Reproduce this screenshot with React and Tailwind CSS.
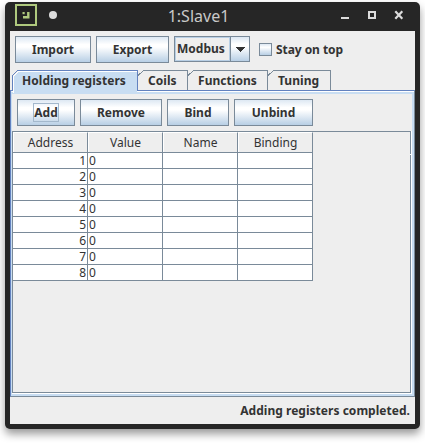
import React from "react";

function Button({ children, width, focused }) {
  return (
    <button
      className={`flex h-[27px] shrink-0 items-center justify-center border border-[#7a8a99] bg-[linear-gradient(to_bottom,#dde8f3_0%,#ffffff_30%,#ffffff_40%,#b8cfe5_100%)] text-[12px] leading-[17px] font-bold ${width}`}
    >
      <span
        className={`flex h-[19px] items-center justify-center border ${focused ? "w-[26px] border-[#a3b8cc]" : "border-transparent"}`}
      >
        {children}
      </span>
    </button>
  );
}

function Tab({ label, width, points, selected }) {
  return (
    <div className={`relative h-[21px] shrink-0 ${width} ${selected ? "z-10" : ""}`}>
      <svg className="absolute top-0 left-0 h-[23px] w-full" shapeRendering="crispEdges">
        {selected && <path d="M1 23V6L6 1H125V23Z" fill="#c8ddf2" />}
        {selected && <path d="M1.5 23V6.5L6.5 1.5H125" fill="none" stroke="#fff" />}
        <path d={points} fill="none" stroke={selected ? "#6382bf" : "#7a8a99"} />
      </svg>
      <span className="relative flex h-[21px] items-center pl-[10px] text-[12px] font-bold tracking-[0.04px] whitespace-nowrap">
        {label}
      </span>
    </div>
  );
}

const columns = ["Address", "Value", "Name", "Binding"];
const rows = [1, 2, 3, 4, 5, 6, 7, 8];

function RegisterTable() {
  return (
    <div className="w-[300px] text-[12px]">
      <div className="flex h-[21px] border-b border-[#7a8a99]">
        {columns.map((c) => (
          <div
            key={c}
            className="flex h-[20px] w-[75px] items-center justify-center border-t border-r border-l border-t-white border-r-[#7a8a99] border-l-white"
          >
            {c}
          </div>
        ))}
      </div>
      {rows.map((n) => (
        <div key={n} className="flex h-4 border-b border-[#7a8a99] bg-white leading-[15px]">
          <div className="h-[15px] w-[75px] border-r border-[#7a8a99] pr-px text-right">{n}</div>
          <div className="h-[15px] w-[75px] border-r border-[#7a8a99] pl-px">0</div>
          <div className="h-[15px] w-[75px] border-r border-[#7a8a99]" />
          <div className="h-[15px] w-[75px] border-r border-[#7a8a99]" />
        </div>
      ))}
    </div>
  );
}

function TitleBar() {
  return (
    <div className="flex h-[29px] shrink-0 items-start text-[#dcdcdc]">
      <svg className="mt-[2px] ml-[10px] shrink-0" width="22" height="22" viewBox="0 0 22 22">
        <rect x="1" y="1" width="20" height="20" fill="#222" stroke="#afc97e" strokeWidth="2" />
        <path d="M7.5 8h2.2v2.2H7.5z" fill="#afc97e" />
        <path d="M13.3 8v5.3H8" fill="none" stroke="#afc97e" strokeWidth="2.4" />
      </svg>
      <div className="mt-[9px] ml-[12px] h-2 w-2 shrink-0 rounded-full bg-[#dcdcdc]" />
      <div className="w-[283px] shrink-0 text-center text-[16px] leading-[28px] text-[#c9c9c9]">
        1:Slave1
      </div>
      <svg width="64" height="29" fill="none" stroke="#dcdcdc" strokeWidth="2" className="shrink-0">
        <path d="M1 16h8" />
        <rect x="29" y="10" width="6" height="6" />
        <path d="M55.3 9.3l7 7.4M62.3 9.3l-7 7.4" strokeWidth="2.2" />
      </svg>
    </div>
  );
}

export default function App() {
  return (
    <div
      className="h-[443px] w-[425px] overflow-hidden bg-white px-[5px] pt-[2px] text-[#333333]"
      style={{ fontFamily: '"Noto Sans", sans-serif' }}
    >
      <div className="flex h-[427px] w-[415px] flex-col rounded-[5px] bg-[#262626] px-[5px] pb-[5px] shadow-[0_5px_9px_rgba(0,0,0,0.4)]">
        <div className="-mx-[5px]">
          <TitleBar />
        </div>
        <div className="flex h-[393px] w-[405px] flex-col bg-[#eeeeee]">
          <div className="flex h-[39px] shrink-0 gap-[5px] pt-[5px] pl-[5px]">
            <Button width="w-[76px]">Import</Button>
            <Button width="w-[73px]">Export</Button>
            <div className="flex h-[26px] w-[76px] border border-[#7a8a99] text-[12px] font-bold">
              <div className="flex w-[55px] items-center border border-[#b8cfe5] pb-px pl-px">
                Modbus
              </div>
              <div className="flex w-[19px] items-center justify-center border-l border-[#7a8a99] bg-[linear-gradient(to_bottom,#dde8f3_0%,#ffffff_30%,#ffffff_40%,#b8cfe5_100%)]">
                <svg width="10" height="5" className="mt-px" shapeRendering="crispEdges">
                  <path d="M0 0h10L5 5z" fill="#333" />
                </svg>
              </div>
            </div>
            <label className="ml-[4px] flex h-[27px] items-center gap-[4px] text-[12px] font-bold tracking-[-0.06px]">
              <span className="h-[13px] w-[13px] border border-[#7a8a99] bg-[linear-gradient(to_bottom,#dde8f3_0%,#ffffff_30%,#b8cfe5_100%)]" />
              Stay on top
            </label>
          </div>
          <div className="flex h-[20px] shrink-0 pl-[2px]">
            <Tab label="Holding registers" width="w-[126px]" selected points="M.5 20.5V5.5L5.5 .5H125.5V20.5" />
            <Tab label="Coils" width="w-[50px]" points="M0 5.5L5.5 .5H49.5V20" />
            <Tab label="Functions" width="w-[80px]" points="M0 5.5L5.5 .5H79.5V20" />
            <Tab label="Tuning" width="w-[63px]" points="M0 5.5L5.5 .5H62.5V20" />
          </div>
          <div className="flex h-[307px] w-[405px] shrink-0 flex-col border border-t-[#6382bf] border-r-[#7a8a99] border-b-[#7a8a99] border-l-[#6382bf]">
            <div className="flex h-[305px] flex-col border-t border-l border-t-white border-l-[#c8ddf2]">
              <div className="flex h-[304px] flex-col border-t-2 border-r-2 border-b-2 border-[#c8ddf2]">
                <div className="flex h-[37px] shrink-0 gap-[5px] pt-[5px] pl-[5px]">
                  <Button width="w-[58px]" focused>Add</Button>
                  <Button width="w-[82px]">Remove</Button>
                  <Button width="w-[62px]">Bind</Button>
                  <Button width="w-[79px]">Unbind</Button>
                </div>
                <div className="h-[263px] w-[400px] border-r border-b border-white">
                  <div className="relative h-[262px] w-[399px] border border-[#7a8a99]">
                    <RegisterTable />
                    <div className="absolute top-[22px] -right-px h-px w-px bg-white" />
                  </div>
                </div>
              </div>
            </div>
          </div>
          <div className="flex h-[27px] items-center justify-end pr-[5px] text-[12px] font-bold tracking-[0.03px]">
            Adding registers completed.
          </div>
        </div>
      </div>
    </div>
  );
}
